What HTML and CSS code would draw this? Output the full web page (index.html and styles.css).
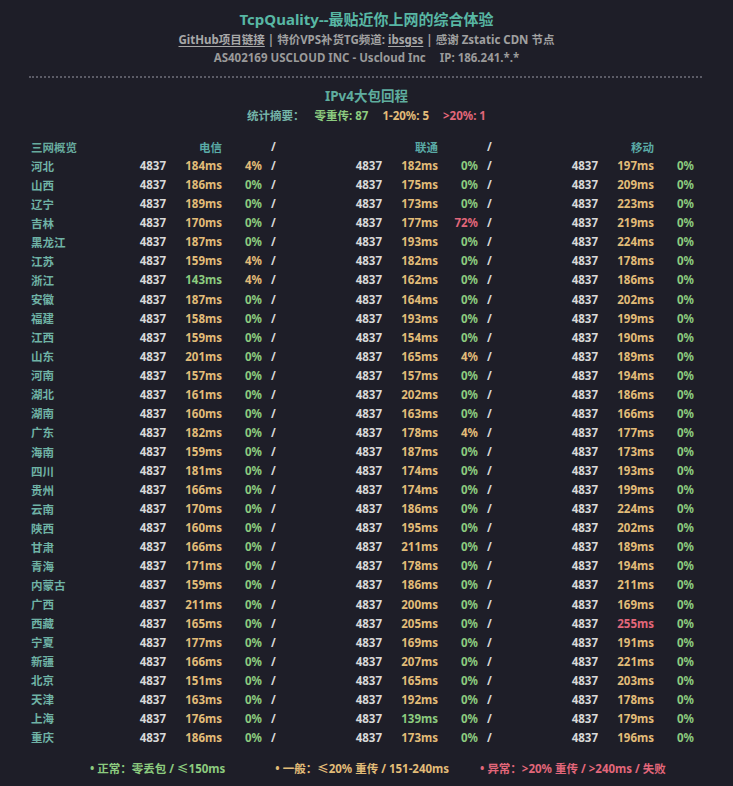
FILE: index.html
```html
<!DOCTYPE html>
<html lang="zh-CN">
<head>
<meta charset="utf-8">
<title>TcpQuality</title>
<link rel="stylesheet" href="styles.css">
</head>
<body>
<div class="page">
  <header class="top">
    <h1 class="title">TcpQuality--最贴近你上网的综合体验</h1>
    <p class="sub"><a class="lnk">GitHub项目链接</a> | 特价VPS补货TG频道: <a class="lnk">ibsgss</a> | 感谢 Zstatic CDN 节点</p>
    <p class="asn">AS402169 USCLOUD INC - Uscloud Inc<span class="ip">IP: 186.241.*.*</span></p>
  </header>
  <hr class="divider">
  <h2 class="section">IPv4大包回程</h2>
  <div class="stats">
    <span class="lbl">统计摘要：</span>
    <span class="g">零重传: 87</span>
    <span class="y">1-20%: 5</span>
    <span class="r">&gt;20%: 1</span>
  </div>

  <div class="table">
    <div class="row head">
      <span class="name">三网概览</span><span></span><span class="isp">电信</span><span></span><span class="s">/</span>
      <span></span><span class="isp">联通</span><span></span><span class="s">/</span>
      <span></span><span class="isp">移动</span><span></span>
    </div>
    <div class="row"><span class="name">河北</span><span class="n">4837</span><span class="y">184ms</span><span class="y">4%</span><span class="s">/</span><span class="n">4837</span><span class="y">182ms</span><span class="g">0%</span><span class="s">/</span><span class="n">4837</span><span class="y">197ms</span><span class="g">0%</span></div>
    <div class="row"><span class="name">山西</span><span class="n">4837</span><span class="y">186ms</span><span class="g">0%</span><span class="s">/</span><span class="n">4837</span><span class="y">175ms</span><span class="g">0%</span><span class="s">/</span><span class="n">4837</span><span class="y">209ms</span><span class="g">0%</span></div>
    <div class="row"><span class="name">辽宁</span><span class="n">4837</span><span class="y">189ms</span><span class="g">0%</span><span class="s">/</span><span class="n">4837</span><span class="y">173ms</span><span class="g">0%</span><span class="s">/</span><span class="n">4837</span><span class="y">223ms</span><span class="g">0%</span></div>
    <div class="row"><span class="name">吉林</span><span class="n">4837</span><span class="y">170ms</span><span class="g">0%</span><span class="s">/</span><span class="n">4837</span><span class="y">177ms</span><span class="r">72%</span><span class="s">/</span><span class="n">4837</span><span class="y">219ms</span><span class="g">0%</span></div>
    <div class="row"><span class="name">黑龙江</span><span class="n">4837</span><span class="y">187ms</span><span class="g">0%</span><span class="s">/</span><span class="n">4837</span><span class="y">193ms</span><span class="g">0%</span><span class="s">/</span><span class="n">4837</span><span class="y">224ms</span><span class="g">0%</span></div>
    <div class="row"><span class="name">江苏</span><span class="n">4837</span><span class="y">159ms</span><span class="y">4%</span><span class="s">/</span><span class="n">4837</span><span class="y">182ms</span><span class="g">0%</span><span class="s">/</span><span class="n">4837</span><span class="y">178ms</span><span class="g">0%</span></div>
    <div class="row"><span class="name">浙江</span><span class="n">4837</span><span class="g">143ms</span><span class="y">4%</span><span class="s">/</span><span class="n">4837</span><span class="y">162ms</span><span class="g">0%</span><span class="s">/</span><span class="n">4837</span><span class="y">186ms</span><span class="g">0%</span></div>
    <div class="row"><span class="name">安徽</span><span class="n">4837</span><span class="y">187ms</span><span class="g">0%</span><span class="s">/</span><span class="n">4837</span><span class="y">164ms</span><span class="g">0%</span><span class="s">/</span><span class="n">4837</span><span class="y">202ms</span><span class="g">0%</span></div>
    <div class="row"><span class="name">福建</span><span class="n">4837</span><span class="y">158ms</span><span class="g">0%</span><span class="s">/</span><span class="n">4837</span><span class="y">193ms</span><span class="g">0%</span><span class="s">/</span><span class="n">4837</span><span class="y">199ms</span><span class="g">0%</span></div>
    <div class="row"><span class="name">江西</span><span class="n">4837</span><span class="y">159ms</span><span class="g">0%</span><span class="s">/</span><span class="n">4837</span><span class="y">154ms</span><span class="g">0%</span><span class="s">/</span><span class="n">4837</span><span class="y">190ms</span><span class="g">0%</span></div>
    <div class="row"><span class="name">山东</span><span class="n">4837</span><span class="y">201ms</span><span class="g">0%</span><span class="s">/</span><span class="n">4837</span><span class="y">165ms</span><span class="y">4%</span><span class="s">/</span><span class="n">4837</span><span class="y">189ms</span><span class="g">0%</span></div>
    <div class="row"><span class="name">河南</span><span class="n">4837</span><span class="y">157ms</span><span class="g">0%</span><span class="s">/</span><span class="n">4837</span><span class="y">157ms</span><span class="g">0%</span><span class="s">/</span><span class="n">4837</span><span class="y">194ms</span><span class="g">0%</span></div>
    <div class="row"><span class="name">湖北</span><span class="n">4837</span><span class="y">161ms</span><span class="g">0%</span><span class="s">/</span><span class="n">4837</span><span class="y">202ms</span><span class="g">0%</span><span class="s">/</span><span class="n">4837</span><span class="y">186ms</span><span class="g">0%</span></div>
    <div class="row"><span class="name">湖南</span><span class="n">4837</span><span class="y">160ms</span><span class="g">0%</span><span class="s">/</span><span class="n">4837</span><span class="y">163ms</span><span class="g">0%</span><span class="s">/</span><span class="n">4837</span><span class="y">166ms</span><span class="g">0%</span></div>
    <div class="row"><span class="name">广东</span><span class="n">4837</span><span class="y">182ms</span><span class="g">0%</span><span class="s">/</span><span class="n">4837</span><span class="y">178ms</span><span class="y">4%</span><span class="s">/</span><span class="n">4837</span><span class="y">177ms</span><span class="g">0%</span></div>
    <div class="row"><span class="name">海南</span><span class="n">4837</span><span class="y">159ms</span><span class="g">0%</span><span class="s">/</span><span class="n">4837</span><span class="y">187ms</span><span class="g">0%</span><span class="s">/</span><span class="n">4837</span><span class="y">173ms</span><span class="g">0%</span></div>
    <div class="row"><span class="name">四川</span><span class="n">4837</span><span class="y">181ms</span><span class="g">0%</span><span class="s">/</span><span class="n">4837</span><span class="y">174ms</span><span class="g">0%</span><span class="s">/</span><span class="n">4837</span><span class="y">193ms</span><span class="g">0%</span></div>
    <div class="row"><span class="name">贵州</span><span class="n">4837</span><span class="y">166ms</span><span class="g">0%</span><span class="s">/</span><span class="n">4837</span><span class="y">174ms</span><span class="g">0%</span><span class="s">/</span><span class="n">4837</span><span class="y">199ms</span><span class="g">0%</span></div>
    <div class="row"><span class="name">云南</span><span class="n">4837</span><span class="y">170ms</span><span class="g">0%</span><span class="s">/</span><span class="n">4837</span><span class="y">186ms</span><span class="g">0%</span><span class="s">/</span><span class="n">4837</span><span class="y">224ms</span><span class="g">0%</span></div>
    <div class="row"><span class="name">陕西</span><span class="n">4837</span><span class="y">160ms</span><span class="g">0%</span><span class="s">/</span><span class="n">4837</span><span class="y">195ms</span><span class="g">0%</span><span class="s">/</span><span class="n">4837</span><span class="y">202ms</span><span class="g">0%</span></div>
    <div class="row"><span class="name">甘肃</span><span class="n">4837</span><span class="y">166ms</span><span class="g">0%</span><span class="s">/</span><span class="n">4837</span><span class="y">211ms</span><span class="g">0%</span><span class="s">/</span><span class="n">4837</span><span class="y">189ms</span><span class="g">0%</span></div>
    <div class="row"><span class="name">青海</span><span class="n">4837</span><span class="y">171ms</span><span class="g">0%</span><span class="s">/</span><span class="n">4837</span><span class="y">178ms</span><span class="g">0%</span><span class="s">/</span><span class="n">4837</span><span class="y">194ms</span><span class="g">0%</span></div>
    <div class="row"><span class="name">内蒙古</span><span class="n">4837</span><span class="y">159ms</span><span class="g">0%</span><span class="s">/</span><span class="n">4837</span><span class="y">186ms</span><span class="g">0%</span><span class="s">/</span><span class="n">4837</span><span class="y">211ms</span><span class="g">0%</span></div>
    <div class="row"><span class="name">广西</span><span class="n">4837</span><span class="y">211ms</span><span class="g">0%</span><span class="s">/</span><span class="n">4837</span><span class="y">200ms</span><span class="g">0%</span><span class="s">/</span><span class="n">4837</span><span class="y">169ms</span><span class="g">0%</span></div>
    <div class="row"><span class="name">西藏</span><span class="n">4837</span><span class="y">165ms</span><span class="g">0%</span><span class="s">/</span><span class="n">4837</span><span class="y">205ms</span><span class="g">0%</span><span class="s">/</span><span class="n">4837</span><span class="r">255ms</span><span class="g">0%</span></div>
    <div class="row"><span class="name">宁夏</span><span class="n">4837</span><span class="y">177ms</span><span class="g">0%</span><span class="s">/</span><span class="n">4837</span><span class="y">169ms</span><span class="g">0%</span><span class="s">/</span><span class="n">4837</span><span class="y">191ms</span><span class="g">0%</span></div>
    <div class="row"><span class="name">新疆</span><span class="n">4837</span><span class="y">166ms</span><span class="g">0%</span><span class="s">/</span><span class="n">4837</span><span class="y">207ms</span><span class="g">0%</span><span class="s">/</span><span class="n">4837</span><span class="y">221ms</span><span class="g">0%</span></div>
    <div class="row"><span class="name">北京</span><span class="n">4837</span><span class="y">151ms</span><span class="g">0%</span><span class="s">/</span><span class="n">4837</span><span class="y">165ms</span><span class="g">0%</span><span class="s">/</span><span class="n">4837</span><span class="y">203ms</span><span class="g">0%</span></div>
    <div class="row"><span class="name">天津</span><span class="n">4837</span><span class="y">163ms</span><span class="g">0%</span><span class="s">/</span><span class="n">4837</span><span class="y">192ms</span><span class="g">0%</span><span class="s">/</span><span class="n">4837</span><span class="y">178ms</span><span class="g">0%</span></div>
    <div class="row"><span class="name">上海</span><span class="n">4837</span><span class="y">176ms</span><span class="g">0%</span><span class="s">/</span><span class="n">4837</span><span class="g">139ms</span><span class="g">0%</span><span class="s">/</span><span class="n">4837</span><span class="y">179ms</span><span class="g">0%</span></div>
    <div class="row"><span class="name">重庆</span><span class="n">4837</span><span class="y">186ms</span><span class="g">0%</span><span class="s">/</span><span class="n">4837</span><span class="y">173ms</span><span class="g">0%</span><span class="s">/</span><span class="n">4837</span><span class="y">196ms</span><span class="g">0%</span></div>
  </div>

  <div class="legend">
    <span class="item g"><span class="dot">•</span>正常：零丢包 / ≤150ms</span>
    <span class="item y mid"><span class="dot">•</span>一般：≤20% 重传 / 151-240ms</span>
    <span class="item r last"><span class="dot">•</span>异常：&gt;20% 重传 / &gt;240ms / 失败</span>
  </div>
</div>
</body>
</html>
```

FILE: styles.css
```css
html, body {
  margin: 0;
  background: #1e1e28;
}

body {
  font-family: "Noto Sans", "Noto Sans CJK SC", sans-serif;
  font-weight: 700;
  color: #d6d6d6;
}

.page {
  padding: 9px 31px 0;
}

.top {
  text-align: center;
}

.title {
  margin: 0;
  font-size: 15px;
  line-height: 20px;
  font-weight: 700;
  color: #58b7a4;
}

.sub {
  margin: 2px 0 0;
  font-size: 11.5px;
  line-height: 18px;
  color: #a0a0a0;
}

.lnk {
  color: #a8a8a8;
  text-decoration: underline;
  text-underline-offset: 2px;
}

.asn {
  margin: 0;
  font-size: 11.5px;
  line-height: 17px;
  color: #9a9a9a;
}

.ip {
  margin-left: 14px;
}

.divider {
  margin: 10px 0 0 -2px;
  height: 0;
  border: 0;
  border-top: 2px dotted #5b5b66;
}

.section {
  margin: 8px 0 0;
  text-align: center;
  font-size: 13.5px;
  line-height: 20px;
  font-weight: 700;
  color: #5fad9f;
}

.stats {
  margin-top: 1px;
  display: flex;
  justify-content: center;
  gap: 14px;
  font-size: 11.5px;
  line-height: 18px;
}

.stats .lbl {
  color: #74b4a8;
  margin-right: -4px;
}

.table {
  margin-top: 12px;
}

.row {
  display: grid;
  grid-template-columns: 105px 30px 56px 40px 90px 30px 56px 40px 90px 30px 56px 40px;
  height: 19.07px;
  align-items: center;
  font-size: 11.5px;
  white-space: nowrap;
}

.row > span {
  text-align: right;
}

.row > .name {
  text-align: left;
  color: #6fb2a5;
}

.row > .s {
  text-align: left;
  padding-left: 9px;
  color: #d6d6d6;
}

.head .isp {
  color: #5aaaa6;
}

.head .name {
  color: #67aa9e;
}

.n { color: #d8d8d8; }
.g { color: #8ccb7f; }
.y { color: #e2bc78; }
.r { color: #e2677a; }

.legend {
  margin-top: 13px;
  display: flex;
  padding-left: 59px;
  font-size: 11.5px;
  line-height: 18px;
}

.legend .dot {
  margin-right: 3px;
}

.legend .mid {
  margin-left: 50px;
}

.legend .last {
  margin-left: 31px;
}
```
